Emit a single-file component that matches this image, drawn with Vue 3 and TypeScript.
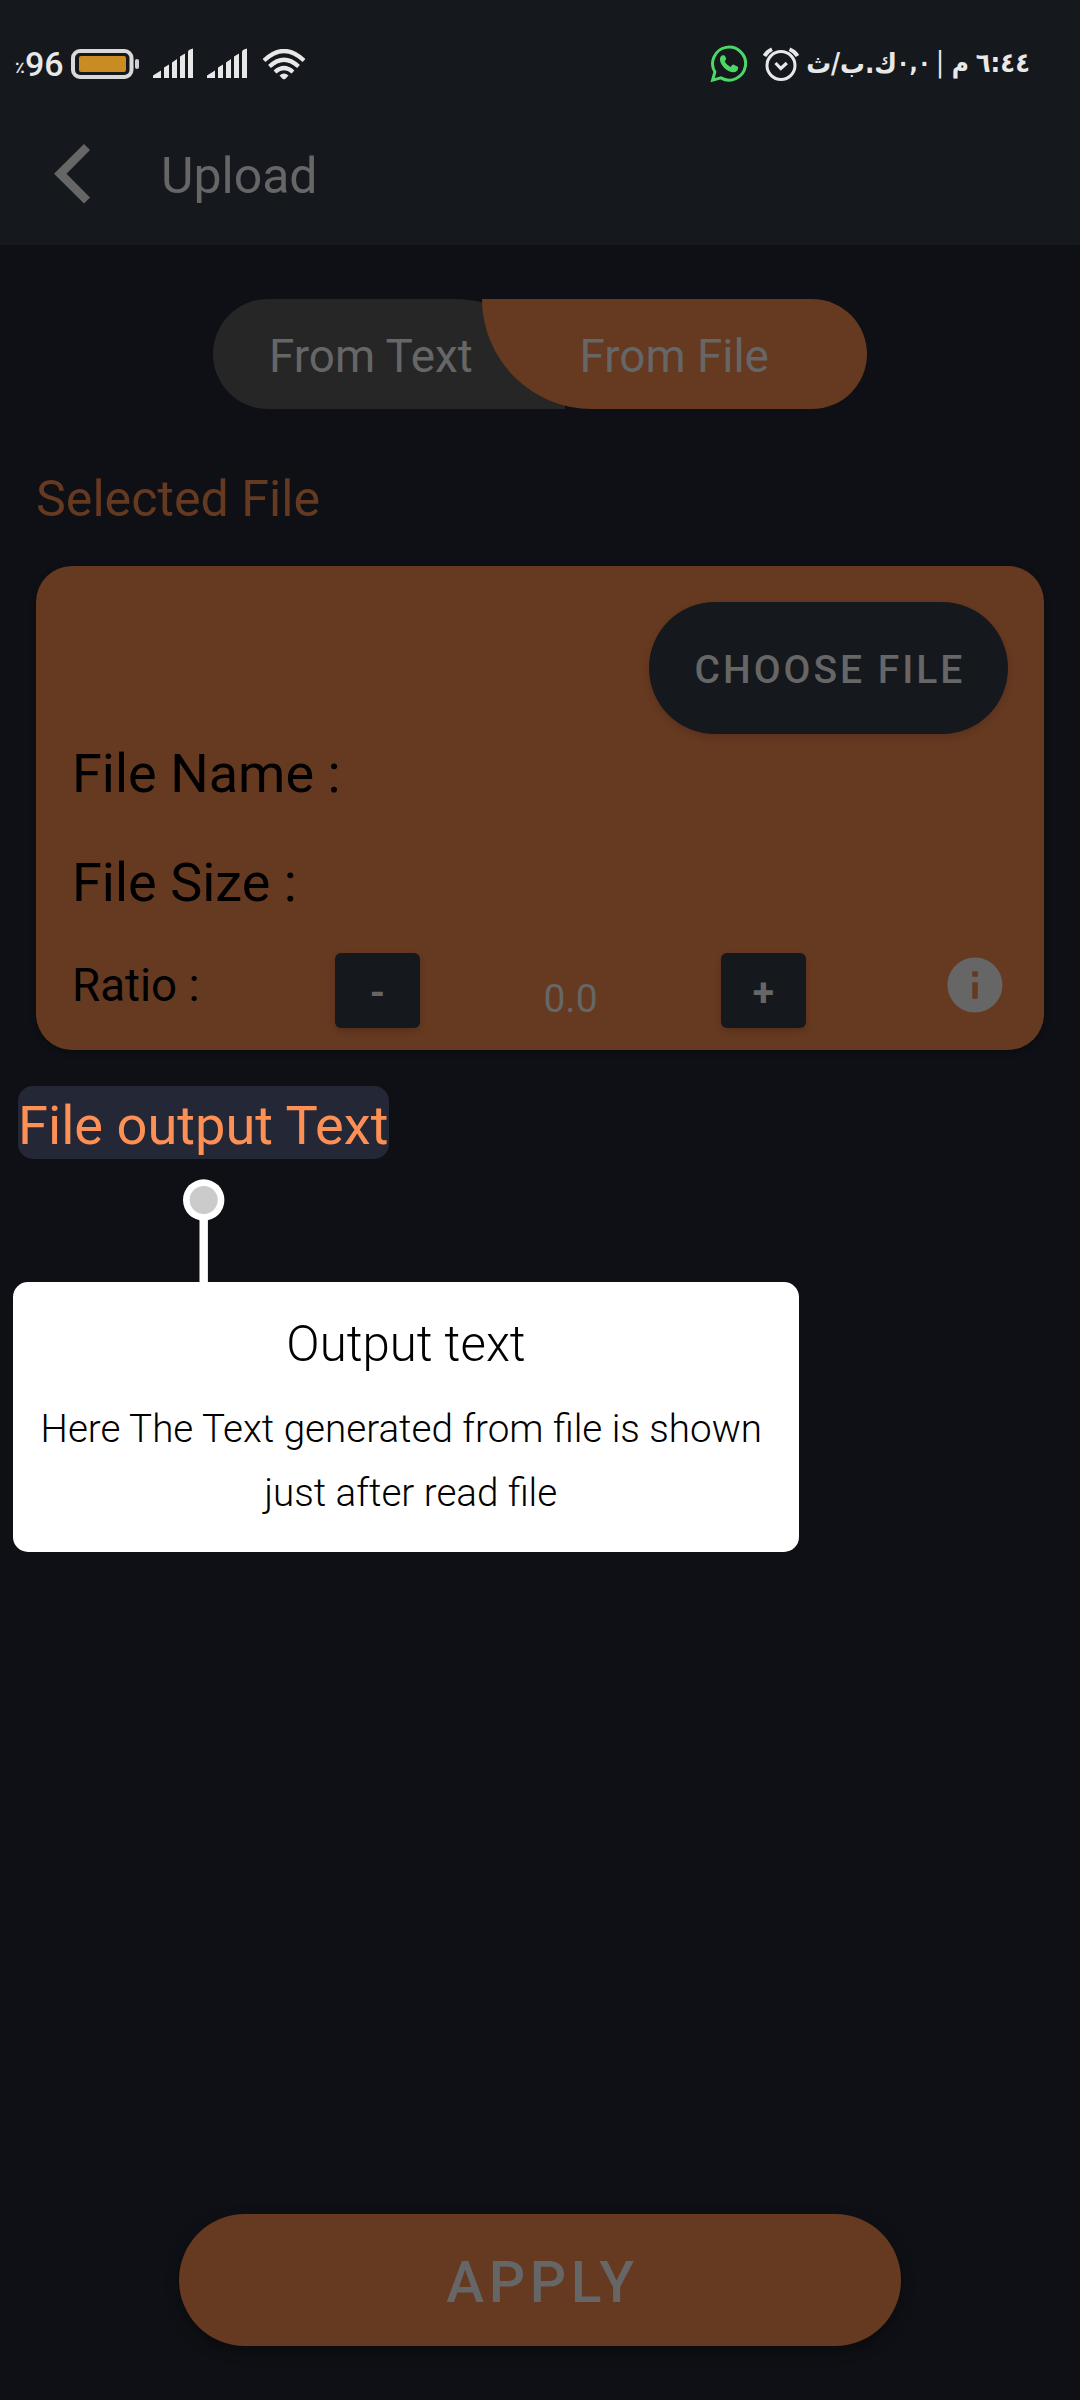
<script setup lang="ts">
import { ref } from 'vue'

const ratio = ref(0)
const fileName = ref('')
const fileSize = ref('')

function changeRatio(step: number): void {
  ratio.value = Math.max(0, Math.round((ratio.value + step) * 10) / 10)
}
</script>

<template>
  <div class="screen">
    <header class="top">
      <div class="status">
        <div class="status-left">
          <span class="pct">٪</span><span class="level">96</span>
          <svg class="battery" width="69" height="30" viewBox="0 0 69 30">
            <rect x="2" y="2" width="58.500" height="26" rx="7" fill="none" stroke="#d9d9d9" stroke-width="4" />
            <rect x="8" y="7" width="47" height="16" rx="2" fill="#c98c22" />
            <rect x="64" y="10" width="4" height="10" rx="2" fill="#d0d0d0" />
          </svg>
          <svg v-for="n in 2" :key="n" class="signal" width="41" height="30" viewBox="0 0 41 30">
            <path
              d="M0 30V27.5L8 22.5V30ZM11 30V19.5L16 16.5V30ZM19 30V14.5L24 11V30ZM27 30V8.500L32 5.500V30ZM35 30V4Q35 2.500 37 1.600L40 .5V30Z"
              fill="#e8e8e8"
            />
          </svg>
          <svg class="wifi" width="44" height="32" viewBox="0 0 44 32">
            <g fill="none" stroke="#e8e8e8" stroke-width="4.200">
              <path d="M2 11.500Q22 -7.500 42 11.500" />
              <path d="M7.500 17.500Q22 4 36.500 17.500" />
              <path d="M13 23Q22 15 31 23" />
            </g>
            <path d="M17.500 26.500Q22 22.500 26.500 26.500L23.500 29.700Q22 31 20.500 29.700Z" fill="#e8e8e8" />
          </svg>
        </div>
        <div class="status-right">
          <svg class="whatsapp" width="38" height="38" viewBox="0 0 38 38">
            <path d="M2.600 35.200L4.900 27A16.500 16.500 0 1 1 10.900 32.900Z" fill="none" stroke="#4bd866" stroke-width="3" stroke-linejoin="miter" />
            <path
              d="M12.500 10.300C11 10.700 9.900 12.500 9.900 14.500C10.400 20.500 17 27 23.500 27.300C26 27.300 28.100 25.500 28.200 23C28.200 22 27.900 21.600 27 21.200L23.800 19.700C23 19.400 22.500 19.600 22 20.200L20.700 21.900C17.900 20.700 15.800 18.700 14.700 16.300L15.900 14.800C16.300 14.300 16.300 13.800 16.100 13.200L14.900 10.900C14.500 10.100 13.700 10 12.500 10.300Z"
              fill="#4bd866"
            />
          </svg>
          <svg class="alarm" width="38" height="38" viewBox="0 0 38 38">
            <g fill="none" stroke="#e8e8e8">
              <circle cx="19" cy="20.500" r="14" stroke-width="3" />
              <path d="M13.500 18L18.800 23.500L24.800 18" stroke-width="3.200" />
              <path d="M2.500 11Q5 6.500 10 4.300M27.500 4.300Q33 6.500 35.500 11" stroke-width="3.800" />
            </g>
          </svg>
          <div class="clock" dir="rtl">
            <span class="time">٦:٤٤</span>
            <span class="period">م</span>
            <span class="bar">|</span>
            <span class="speed">٠,٠</span>
            <span class="unit">ك.ب/ث</span>
          </div>
        </div>
      </div>
      <div class="toolbar">
        <svg class="back" width="36" height="60" viewBox="0 0 36 60">
          <path d="M30 0L36 6L12.500 29.700L36 53.500L30 59.500L0 29.700Z" fill="#666" />
        </svg>
        <h1 class="title">Upload</h1>
      </div>
    </header>

    <main class="content">
      <nav class="tabs">
        <div class="tab tab-text">From Text</div>
        <div class="tab tab-file">From File</div>
      </nav>

      <h2 class="section">Selected File</h2>

      <section class="card">
        <button class="choose">CHOOSE FILE</button>
        <p class="row">File Name : {{ fileName }}</p>
        <p class="row second">File Size : {{ fileSize }}</p>
        <div class="ratio">
          <span class="ratio-label">Ratio :</span>
          <button class="step" @click="changeRatio(-0.1)">-</button>
          <span class="value">{{ ratio.toFixed(1) }}</span>
          <button class="step" @click="changeRatio(0.1)">+</button>
          <svg class="info" width="66" height="66" viewBox="0 0 24 24">
            <path d="M12 2C6.480 2 2 6.480 2 12s4.480 10 10 10 10-4.480 10-10S17.520 2 12 2zm1 15h-2v-6h2v6zm0-8h-2V7h2v2z" fill="#666" />
          </svg>
        </div>
      </section>

      <div class="output">
        <span class="output-label">File output Text</span>
        <div class="guide">
          <svg class="pointer" width="42" height="103" viewBox="0 0 42 103">
            <rect x="16.500" y="30" width="8.400" height="73" fill="#fff" />
            <circle cx="20.700" cy="21" r="20.700" fill="#fff" />
            <circle cx="20.700" cy="21" r="14" fill="#cbcbcb" />
          </svg>
          <div class="bubble">
            <h3>Output text</h3>
            <p>Here The Text generated from file is shown&nbsp;<br>&nbsp;just after read file</p>
          </div>
        </div>
      </div>
    </main>

    <button class="apply">APPLY</button>
  </div>
</template>

<style>
body {
  margin: 0;
  background: #0f1015;
}
</style>

<style scoped>
.screen {
  width: 1080px;
  height: 2400px;
  display: flex;
  flex-direction: column;
  overflow: hidden;
  background: #0f1015;
  color: #666;
  font-family: Roboto, "Liberation Sans", sans-serif;
}
h1, h2, h3, p {
  margin: 0;
  font-weight: 400;
}
button {
  display: block;
  border: 0;
  padding: 0;
  font-family: inherit;
  font-weight: 500;
  color: #666;
}
svg {
  display: block;
  flex: none;
}
.top {
  height: 245px;
  background: #15181c;
}
.status {
  height: 128px;
  display: flex;
  justify-content: space-between;
  color: #e8e8e8;
}
.status-left {
  display: flex;
  align-items: flex-start;
  padding: 49px 0 0 15px;
}
.pct {
  width: 10px;
  font: bold 16px/38px "DejaVu Sans", sans-serif;
}
.level {
  width: 46px;
  font-size: 34px;
  font-weight: 500;
  line-height: 31px;
}
.battery { margin-right: 13px; }
.signal { margin: -1px 13px 0 0; }
.wifi { margin-left: 1px; }
.status-right {
  display: flex;
  align-items: flex-start;
  padding: 45px 50px 0 0;
}
.alarm { margin: 0 7px 0 14px; }
.clock {
  display: flex;
  width: 223px;
  font: bold 28px/36px "DejaVu Sans Condensed", "DejaVu Sans", sans-serif;
  font-stretch: condensed;
  white-space: nowrap;
}
.clock span { flex: none; }
.time {
  width: 61px;
  font-size: 27px;
}
.period {
  width: 20px;
  font-size: 26px;
}
.bar {
  width: 18px;
  text-align: center;
  font-weight: 400;
}
.speed {
  width: 34px;
  font-size: 24px;
  letter-spacing: -1px;
}
.unit {
  width: 90px;
  font-size: 27.5px;
}
.toolbar {
  display: flex;
  align-items: flex-start;
  padding: 16px 0 0 54px;
}
.title {
  margin-left: 71px;
  font-size: 50px;
  line-height: 64px;
}
.content {
  display: flex;
  flex-direction: column;
  padding: 54px 36px 0;
}
.tabs {
  display: flex;
  width: 654px;
  height: 110px;
  margin-left: 177px;
}
.tab {
  box-sizing: border-box;
  height: 110px;
  font-size: 45.8px;
  line-height: 115px;
  white-space: nowrap;
}
.tab-text {
  width: 352px;
  padding-left: 56px;
  background: #262626;
  border-radius: 55px 110px 0 55px;
}
.tab-file {
  width: 385px;
  margin-left: -83px;
  padding-left: 97.5px;
  background: #663921;
  border-radius: 0 55px 55px 110px;
}
.section {
  margin-top: 60px;
  font-size: 50.2px;
  line-height: 60px;
  color: #663921;
}
.card {
  box-sizing: border-box;
  height: 484px;
  margin-top: 37px;
  padding: 36px;
  border-radius: 36px;
  background: #663921;
  box-shadow: 0 2px 6px rgba(0, 0, 0, 0.3);
  color: #000;
}
.choose {
  box-sizing: border-box;
  width: 359px;
  height: 132px;
  margin-left: auto;
  padding: 3px 0 0 3px;
  border-radius: 66px;
  background: #15181c;
  box-shadow: 0 3px 7px rgba(0, 0, 0, 0.14);
  font-size: 39px;
  letter-spacing: 3px;
}
.row {
  margin-top: 3px;
  font-size: 54px;
  line-height: 73px;
}
.second { margin-top: 36px; }
.ratio {
  display: grid;
  grid-template-columns: 263px 85px 301px 85px 1fr;
  height: 75px;
  margin-top: 34px;
}
.ratio-label {
  font-size: 45.7px;
  line-height: 65px;
}
.step {
  box-sizing: border-box;
  height: 75px;
  padding-top: 5px;
  border-radius: 6px;
  background: #15181c;
  box-shadow: 0 3px 6px rgba(0, 0, 0, 0.16);
  font-size: 39px;
  font-weight: 700;
}
.value {
  font-size: 39px;
  line-height: 92px;
  text-align: center;
  color: #666;
}
.info {
  justify-self: end;
  margin-top: -1px;
}
.output {
  position: relative;
  display: flex;
  margin: 36px 0 0 -18px;
}
.output-label {
  width: 371px;
  height: 73px;
  border-radius: 15px;
  background: #242735;
  color: #ff9055;
  font-size: 54.2px;
  line-height: 79px;
  white-space: nowrap;
}
.guide {
  position: absolute;
  top: 93px;
  left: -5px;
  width: 786px;
}
.pointer { margin-left: 169.5px; }
.bubble {
  box-sizing: border-box;
  height: 270px;
  padding: 32px 20px 0;
  border-radius: 15px;
  background: #fff;
  color: #000;
  text-align: center;
}
.bubble h3 {
  font-size: 49.2px;
  font-weight: 300;
  line-height: 60px;
}
.bubble p {
  margin-top: 23px;
  font-size: 38.6px;
  font-weight: 300;
  line-height: 64px;
  white-space: nowrap;
}
.apply {
  box-sizing: border-box;
  flex: none;
  width: 722px;
  height: 132px;
  margin: auto auto 54px 179px;
  padding: 4px 0 0 5px;
  border-radius: 66px;
  background: #663921;
  box-shadow: 0 5px 14px rgba(0, 0, 0, 0.35);
  font-size: 57px;
  letter-spacing: 4.7px;
}
</style>
